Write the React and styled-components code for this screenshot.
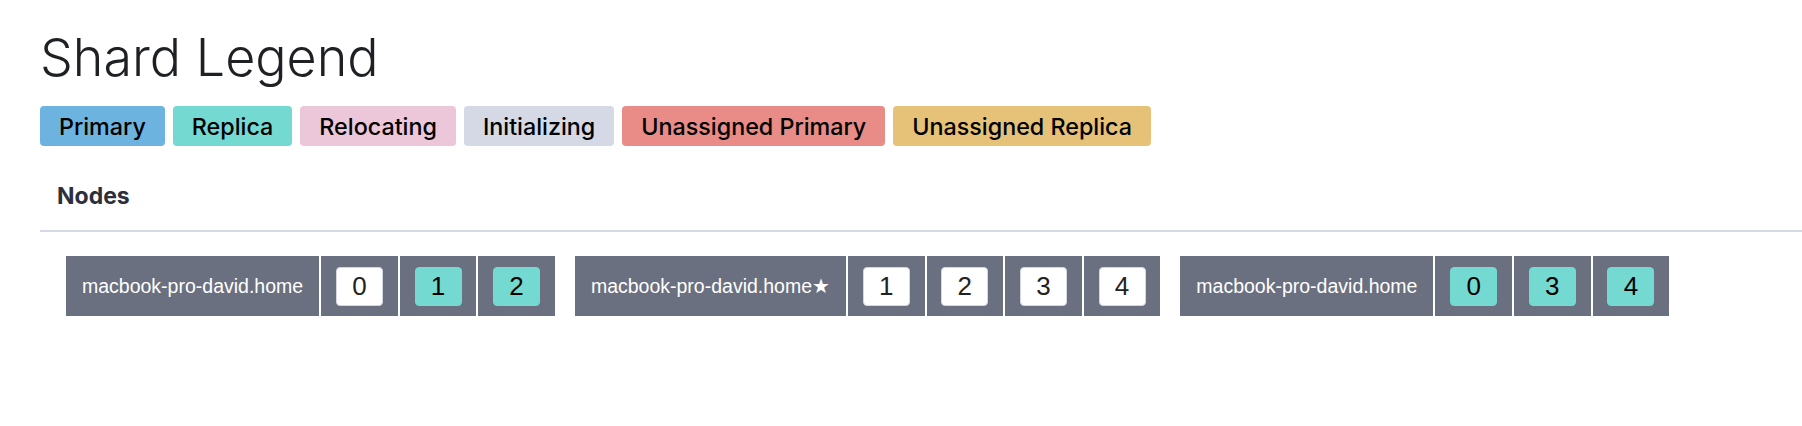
import styled, { createGlobalStyle } from "styled-components";

const GlobalStyle = createGlobalStyle`
  body {
    margin: 0;
    background: #fff;
    font-family: Inter, "Noto Sans", sans-serif;
  }
`;

const legend = [
  { label: "Primary", color: "#6cb3e0" },
  { label: "Replica", color: "#74d9d0" },
  { label: "Relocating", color: "#ecc6d9" },
  { label: "Initializing", color: "#d4d9e5" },
  { label: "Unassigned Primary", color: "#e98b86" },
  { label: "Unassigned Replica", color: "#e6c178" },
];

const nodes = [
  {
    name: "macbook-pro-david.home",
    shards: [
      { id: 0, kind: "primary" },
      { id: 1, kind: "replica" },
      { id: 2, kind: "replica" },
    ],
  },
  {
    name: "macbook-pro-david.home",
    master: true,
    shards: [
      { id: 1, kind: "primary" },
      { id: 2, kind: "primary" },
      { id: 3, kind: "primary" },
      { id: 4, kind: "primary" },
    ],
  },
  {
    name: "macbook-pro-david.home",
    shards: [
      { id: 0, kind: "replica" },
      { id: 3, kind: "replica" },
      { id: 4, kind: "replica" },
    ],
  },
];

const App = () => (
  <Page>
    <GlobalStyle />
    <Title>Shard Legend</Title>
    <Legend>
      {legend.map((item) => (
        <Badge key={item.label} color={item.color}>
          {item.label}
        </Badge>
      ))}
    </Legend>
    <NodesHeader>Nodes</NodesHeader>
    <NodeList>
      {nodes.map((node, i) => (
        <NodeRow key={i}>
          <NodeName>
            {node.name}
            {node.master && <Star>★</Star>}
          </NodeName>
          {node.shards.map((shard) => (
            <ShardCell key={shard.id}>
              <Shard replica={shard.kind === "replica"}>{shard.id}</Shard>
            </ShardCell>
          ))}
        </NodeRow>
      ))}
    </NodeList>
  </Page>
);

const Page = styled.div`
  padding: 27px 0 40px 40px;
`;

const Title = styled.h1`
  margin: 0 0 17px;
  font-size: 52px;
  font-weight: 300;
  line-height: 1.2;
  color: #1f2024;
`;

const Legend = styled.div`
  display: flex;
  gap: 8px;
`;

const Badge = styled.span`
  display: inline-flex;
  align-items: center;
  height: 40px;
  box-sizing: border-box;
  padding: 0 19px;
  border-radius: 4px;
  background: ${({ color }) => color};
  color: #000;
  font-size: 23.3px;
  font-weight: 500;
`;

const NodesHeader = styled.div`
  margin-top: 36px;
  padding: 0 17px 20px;
  border-bottom: 2px solid #d4d9e5;
  font-size: 23px;
  font-weight: 700;
  color: #2d2f3a;
`;

const NodeList = styled.div`
  display: flex;
  gap: 20px;
  margin: 24px 0 0 26px;
`;

const NodeRow = styled.div`
  display: flex;
  gap: 2px;
  height: 60px;
  font-family: "Liberation Sans", Arial, sans-serif;
`;

const NodeName = styled.div`
  display: flex;
  align-items: center;
  padding: 0 16px;
  background: #6b7080;
  color: #fff;
  font-size: 19.5px;
`;

const Star = styled.span`
  font-family: "DejaVu Sans", sans-serif;
  font-size: 20px;
`;

const ShardCell = styled.div`
  display: flex;
  align-items: center;
  justify-content: center;
  width: 76.6px;
  background: #6b7080;
`;

const Shard = styled.div`
  display: flex;
  align-items: center;
  justify-content: center;
  width: 47px;
  height: 39px;
  box-sizing: border-box;
  border-radius: 4px;
  border: 1px solid ${({ replica }) => (replica ? "#74d9d0" : "#d1d7e3")};
  background: ${({ replica }) => (replica ? "#74d9d0" : "#fff")};
  color: ${({ replica }) => (replica ? "#000" : "#222")};
  font-size: 26px;
`;

export default App;
